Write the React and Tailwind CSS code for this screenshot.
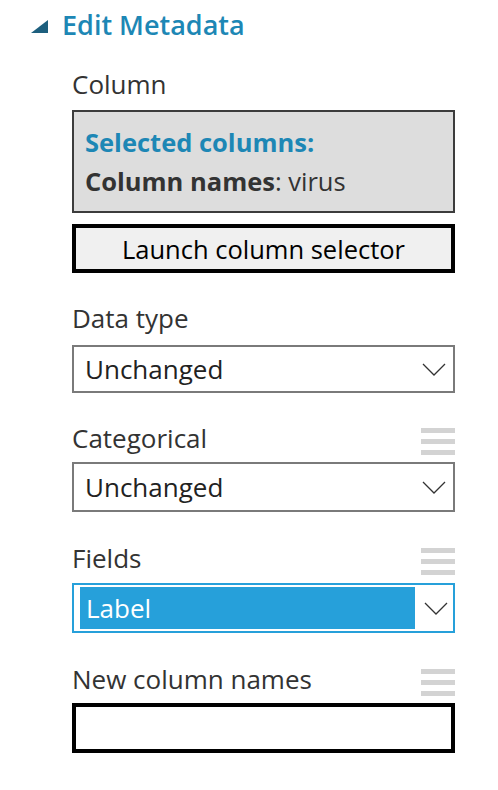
import React from "react";

function Chevron() {
  return (
    <svg width="24" height="13" viewBox="0 0 24 13" className="shrink-0">
      <path d="M1 1 L12 12 L23 1" fill="none" stroke="#333333" strokeWidth="1.3" />
    </svg>
  );
}

function Hamburger() {
  return (
    <div className="flex flex-col gap-[6px] w-[34px] shrink-0">
      <div className="h-[5px] bg-[#d3d3d3]" />
      <div className="h-[5px] bg-[#d3d3d3]" />
      <div className="h-[5px] bg-[#d3d3d3]" />
    </div>
  );
}

function Label({ children, handle, mt }) {
  return (
    <div className={`flex items-end justify-between h-[32px] ${mt}`}>
      <span className="text-[26px] leading-[32px] text-[#333333] -translate-y-[1px]">{children}</span>
      {handle ? <Hamburger /> : null}
    </div>
  );
}

function Select({ value, mt, h }) {
  return (
    <div className={`flex items-center justify-between border-2 border-[#7a7a7a] pl-[11px] pr-[7px] ${h} ${mt}`}>
      <span className="text-[26px] leading-[32px] text-[#222222]">{value}</span>
      <Chevron />
    </div>
  );
}

export default function App() {
  return (
    <div
      className="w-[498px] h-[790px] bg-white relative overflow-hidden"
      style={{ fontFamily: '"Open Sans", "Noto Sans", sans-serif' }}
    >
      <div className="flex items-center h-[50px]">
        <svg width="17" height="13" viewBox="0 0 17 13" className="ml-[31px] mt-[3px]">
          <polygon points="17,0 17,13 0,13" fill="#1d5f7e" />
        </svg>
        <span className="ml-[14px] text-[27px] leading-[50px] font-semibold text-[#1d87b5]">
          Edit Metadata
        </span>
      </div>

      <div className="ml-[72px] w-[383px] flex flex-col">
        <Label mt="mt-[19px]">Column</Label>

        <div className="mt-[9px] h-[103px] border-2 border-[#3c3c3c] bg-[#dddddd] pl-[11px] pt-[11px]">
          <div className="text-[25.5px] leading-[39px] font-bold text-[#1d87b5]">Selected columns:</div>
          <div className="text-[25.5px] leading-[39px] text-[#333333]">
            <span className="font-bold">Column names</span>: virus
          </div>
        </div>

        <div className="mt-[11px] h-[49px] border-4 border-black bg-[#f0f0f0] flex items-center justify-center">
          <span className="text-[25.5px] leading-[32px] text-black">Launch column selector</span>
        </div>

        <Label mt="mt-[30px]">Data type</Label>
        <Select value="Unchanged" mt="mt-[10px]" h="h-[48px]" />

        <Label handle mt="mt-[30px]">Categorical</Label>
        <Select value="Unchanged" mt="mt-[7px]" h="h-[50px]" />

        <Label handle mt="mt-[31px]">Fields</Label>
        <div className="mt-[8px] h-[50px] border-2 border-[#26a0da] py-[2px] pl-[6px] flex items-stretch">
          <div className="flex-1 bg-[#26a0da] flex items-center pl-[6px]">
            <span className="text-[26px] leading-[32px] text-white">Label</span>
          </div>
          <div className="w-[38px] flex items-center justify-start pl-[9px]">
            <Chevron />
          </div>
        </div>

        <Label handle mt="mt-[31px]">New column names</Label>
        <div className="mt-[7px] h-[50px] border-4 border-black bg-white" />
      </div>
    </div>
  );
}
